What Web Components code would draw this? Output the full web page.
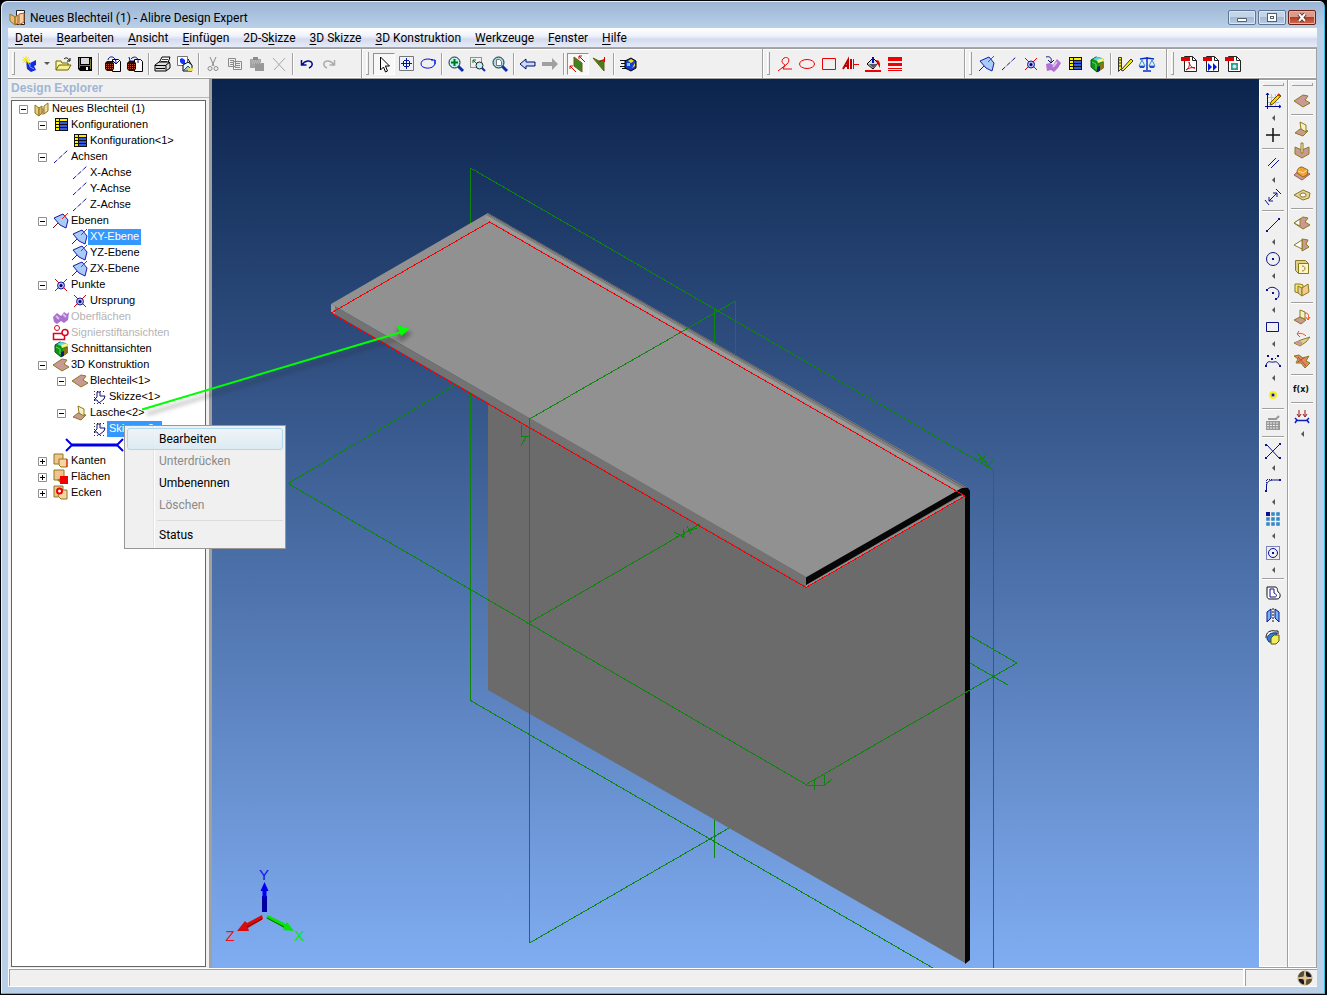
<!DOCTYPE html>
<html lang="de">
<head>
<meta charset="utf-8">
<title>Neues Blechteil (1) - Alibre Design Expert</title>
<style>
    html, body { margin: 0; height: 100%; background: #000; }
    body { font: 12px/16px Roboto, "Open Sans", sans-serif; color: #000; }
</style>
</head>
<body>
<app-window caption="Neues Blechteil (1) - Alibre Design Expert">
    <menu-bar slot="menu" items="_Datei|_Bearbeiten|_Ansicht|_Einfügen|2D-S_kizze|_3D Skizze|_3D Konstruktion|_Werkzeuge|_Fenster|_Hilfe"></menu-bar>

    <tool-band slot="bands" items="new:Neu:menu open:Öffnen save:Speichern | checkout:Auschecken checkin:Einchecken | print:Drucken publish:Veröffentlichen | cut:Ausschneiden copy:Kopieren paste:Einfügen delete:Löschen | undo:Rückgängig redo:Wiederholen"></tool-band>
    <tool-band slot="bands" items="select:Auswählen:pressed pan:Verschieben rotate:Drehen | zoomin:Vergrößern zoomwin:Zoomfenster zoomfit:Einpassen | prev:Zurück next:Vor | plane1:Ausrichten:pressed plane2:Frontansicht | render:Schattierung"></tool-band>
    <tool-band slot="bands" items="redline:Freihand redellipse:Ellipse redrect:Rechteck redtext:Text bucket:Füllfarbe redlines:Linienstärke"></tool-band>
    <tool-band slot="bands" items="ebene:Ebene axis:Achse point:Punkt surface2:Oberfläche config:Konfiguration section:Schnitt | measure:Messen scale:Masse"></tool-band>
    <tool-band slot="bands" items="pdf:PDF pdf3d:PDF-Export pdfpub:PDF-Vorschau"></tool-band>

    <design-explorer slot="work" heading="Design Explorer">
        <tree-item level="0" icon="part" state="open">Neues Blechteil (1)</tree-item>
        <tree-item level="1" icon="config" state="open">Konfigurationen</tree-item>
        <tree-item level="2" icon="config">Konfiguration&lt;1&gt;</tree-item>
        <tree-item level="1" icon="axis" state="open">Achsen</tree-item>
        <tree-item level="2" icon="axis">X-Achse</tree-item>
        <tree-item level="2" icon="axis">Y-Achse</tree-item>
        <tree-item level="2" icon="axis">Z-Achse</tree-item>
        <tree-item level="1" icon="ebene" state="open">Ebenen</tree-item>
        <tree-item level="2" icon="ebene" selected>XY-Ebene</tree-item>
        <tree-item level="2" icon="ebene">YZ-Ebene</tree-item>
        <tree-item level="2" icon="ebene">ZX-Ebene</tree-item>
        <tree-item level="1" icon="point" state="open">Punkte</tree-item>
        <tree-item level="2" icon="point">Ursprung</tree-item>
        <tree-item level="1" icon="surface" dimmed>Oberflächen</tree-item>
        <tree-item level="1" icon="redview" dimmed>Signierstiftansichten</tree-item>
        <tree-item level="1" icon="section">Schnittansichten</tree-item>
        <tree-item level="1" icon="sheet" state="open">3D Konstruktion</tree-item>
        <tree-item level="2" icon="sheet" state="open">Blechteil&lt;1&gt;</tree-item>
        <tree-item level="3" icon="sketch">Skizze&lt;1&gt;</tree-item>
        <tree-item level="2" icon="flange" state="open">Lasche&lt;2&gt;</tree-item>
        <tree-item level="3" icon="sketch" selected>Skizze&lt;2&gt;</tree-item>
        <rollback-bar></rollback-bar>
        <tree-item level="1" icon="edges" state="closed">Kanten</tree-item>
        <tree-item level="1" icon="faces" state="closed">Flächen</tree-item>
        <tree-item level="1" icon="corners" state="closed">Ecken</tree-item>
    </design-explorer>
    <model-view slot="work"></model-view>
    <tool-band slot="work" vertical items="sketchmode:Skizzenmodus:menu plus:Punkt | parallel:Parallel:menu dim:Bemaßung | line:Linie:menu circle:Kreis:menu arc:Bogen:menu rect:Rechteck:menu spline:Spline:menu dot:Knoten | keyboard:Eingabe | trim:Stutzen:menu fillet:Verrundung:menu pattern:Muster:menu cpattern:Kreismuster:menu | offset:Versatz mirror:Spiegeln project:Projizieren"></tool-band>
    <tool-band slot="work" vertical items="sheet:Blech | flange:Lasche bend:Biegung dimple:Sicke hole:Loch | cutl:Schnitt cutr:Eckschnitt closed:Falz unfold:Abwicklung | bendup:Hochbiegen unbend:Aufbiegen rebend:Rückbiegen | fx:Gleichung | constraint:Bedingung:menu"></tool-band>

    <leader-arrow slot="overlay"></leader-arrow>
    <context-menu slot="overlay" items="Bearbeiten:hot|Unterdrücken:off|Umbenennen|Löschen:off|-|Status"></context-menu>
    <status-bar slot="status"></status-bar>
</app-window>

<script>
const TAN = '#e3cf9b', ROSE = '#c99a94', OLIVE = '#8c7a1e', NAVY = '#0a128c';

// pieces shared by several icons
const SHEET = `<path d="M0 8L9 2l5 1-3 4 5 3-7 4z" fill="${ROSE}" stroke="${OLIVE}"/>`;
const PAGE = '<path d="M3.5.5h8l4 4v11h-12z" fill="#fff" stroke="#222"/><path d="M11.5.5v4h4" stroke="#222"/><path d="M0 1h9v4H0z" fill="#e00000"/>';
const BASKET = '<path d="M7.500 3.500h6l2 2v10h-8z" fill="#fff" stroke="#000"/><path d="M0 7l2-2h5l2 2v6l-2 2H2l-2-2z" fill="#2b0d00"/><path d="M1 8.500h7M1 10.500h7M1 12.500h7" stroke="#c05a28" stroke-dasharray="1 1"/>'.replaceAll('.500', '.5');

// 16 x 16 artwork
const ICONS = {
    app: `<path d="M6.5.5h8v14h-8z" fill="#fff" stroke="#222"/><path d="M0 4l5 3v8l-5-4zM5 7l3-2v8l-3 2z" fill="#f0b878" stroke="${OLIVE}"/><path d="M9 4l5-1v9l-5 3z" fill="#f6cfa0" stroke="#c05020"/>`,
    part: `<path d="M1 4l4 3v8l-4-3z" fill="#eccb82" stroke="${OLIVE}"/><path d="M5 10l4-3 5 3-5 4-3-1z" fill="#c9a0a8"/><path d="M5 7l3-2v7l-3 3z" fill="#dcb45e" stroke="${OLIVE}"/><path d="M10 5l4-3v8l-4 3z" fill="#f2dc9e" stroke="${OLIVE}"/>`,
    new: '<path d="M4 5l4 2 6-3v5l-2 1 2 4-5 2-4-3z" fill="#1428e0"/><path d="M8 7v4l4 2M5 5l3 5" stroke="#6e9cff"/><path d="M4 0v8M0 4h8M1 1l6 6M7 1L1 7" stroke="#f4e400"/>',
    open: '<path d="M1 14V5h5l1 2h6v2" fill="#fff8a0" stroke="#6b6400"/><path d="M1 14l3-5h12l-3 5z" fill="#f7f08a" stroke="#6b6400"/><path d="M9 3c2-2 4-1 5 1M15 2v3h-3" stroke="#000"/>',
    save: '<path d="M1 1h14v14H3l-2-2z" fill="#000"/><path d="M4 2h8v6H4z" fill="#d8d8d8"/><path d="M2 2h1v10H2zM13 3h1v10h-1zM2 9h12v1H2z" fill="#807a28"/><path d="M9 11h2v3H9z" fill="#f5f5f5"/>',
    checkout: BASKET + '<path d="M3 4c1-5 8-4 8 3M8 5l3 3 3-3" stroke="#001090"/>',
    checkin: BASKET + '<path d="M11 7c1-7-5-7-7-4M2 1l1 4h4" stroke="#001090"/>',
    print: '<path d="M4 7l3-6h8l-2 6" fill="#fff" stroke="#000"/><path d="M7 3.500h6M6 5.500h6" stroke="#444"/><path d="M0 9l4-3h10l1 2v4l-4 3H0z" fill="#ddd" stroke="#000"/><path d="M0 9.500h11v5M11 9l4-3M1 12.500h9" stroke="#000"/><path d="M8 11h2v1H8z" fill="#e6dc00"/>'.replaceAll('.500', '.5'),
    publish: '<path d="M.5.5h10v9H.5z" fill="#fff" stroke="#777"/><path d="M3 3l2-1 3 2v4H5L3 6z" fill="#1633ff"/><path d="M11 3l3 5" stroke="#000"/><path d="M6 9l5-3 4 3v6H6z" fill="#e8f6ff" stroke="#000"/><path d="M7 14l4-4 4 4" fill="#86c9ee" stroke="#146080"/><path d="M11 12h5v3h-5z" fill="#ead968"/>',
    cut: '<path d="M5 1l4 9M11 1L7 10" stroke="#8b8b8b"/><circle cx="5" cy="12.5" r="2" stroke="#8b8b8b"/><circle cx="11" cy="12.5" r="2" stroke="#8b8b8b"/>',
    copy: '<path d="M1.5 2.5h7v8h-7zM6.500 5.500h8v8h-8z" fill="#f0f0f0" stroke="#8b8b8b"/><path d="M3 4.500h4M3 6.500h3M3 8.500h3M8 7.500h5M8 9.500h5M8 11.500h5" stroke="#8b8b8b"/>'.replaceAll('.500', '.5'),
    paste: '<path d="M1 3h11v9H1z" fill="#a4a4a4"/><path d="M4 1h5v3H4z" fill="#8b8b8b"/><path d="M6 7h9v8H6z" fill="#999"/><path d="M2 5h10M3 7h9" stroke="#ccc" stroke-dasharray="1 1"/>',
    delete: '<path d="M2 2l12 13M14 2L3 14" stroke="#a8a8a8"/>',
    undo: '<path d="M2.5 4v5h5M3 9c3-5 9-5 10-2 1 3-1 4-3 5" stroke="#000b8c" stroke-width="1.5"/>',
    redo: '<path d="M13.5 4v5h-5M13 9C10 4 4 4 3 7c-1 3 1 4 3 5" stroke="#aaa" stroke-width="1.5"/>',
    select: '<path d="M4.5 1v13l3-3 2 5 2-1-2-5h4z" fill="#fff" stroke="#000"/>',
    pan: '<path d="M1.5.5h14v14h-14z" fill="#f0f0f8" stroke="#777"/><path d="M8.5 2v11M3 7.500h11M6 4.500h5M6 10.500h5M5.500 5v5M11.500 5v5" stroke="#001a9c"/>'.replaceAll('.500', '.5'),
    rotate: '<path d="M13 4c-5-2-12-1-12 4s12 6 14 0V4M11 4h4v4" stroke="#0010e0"/>',
    zoomin: '<path d="M10 10l5 5" stroke="#0b2fae" stroke-width="3"/><circle cx="6.5" cy="6.5" r="5.5" fill="#b8f4f4" stroke="#222"/><path d="M6.5 3v7M3 6.5h7" stroke="#007810" stroke-width="2"/>',
    zoomwin: '<path d="M.5 1.5h11v10H.5z" stroke="#333" stroke-dasharray="1 1"/><path d="M3 4h3M3 4v3M3 4l4 4" stroke="#007810"/><path d="M12 12l3 3" stroke="#0b2fae" stroke-width="2"/><circle cx="9.5" cy="9.5" r="3.5" fill="#b8f4f4" stroke="#222"/>',
    zoomfit: '<path d="M10 10l5 5" stroke="#0b2fae" stroke-width="3"/><circle cx="6.5" cy="6.5" r="5.5" fill="#a9dce8" stroke="#222"/><path d="M4.5 3.5h3l2 2v4h-5z" fill="#fff" stroke="#777"/>',
    prev: '<path d="M0 8l6-5v3h9v4H6v3z" fill="#c8dcff" stroke="#000a70"/>',
    next: '<path d="M16 8l-6-6v4H0v4h10v4z" fill="#a0a0a0"/>',
    plane1: '<path d="M4 1l8 6v9L4 10z" fill="#3d8420" stroke="#6b5d10"/><path d="M0 10l6 6M0 13v-3h3M9 0l6 6M9 3V0h3" stroke="#e00000"/>',
    plane2: '<path d="M1 2l6 3 5-1v11z" fill="#3d8420" stroke="#6b5d10"/><path d="M7 6l6-3M12.5 1v5" stroke="#e00000"/>',
    render: '<path d="M0 4.500h6M1 7.500h5M0 10.500h6M2 12.500h6" stroke="#111"/><path d="M5 5l6-3 5 3v7l-5 3-6-3z" fill="#173fd4" stroke="#000"/><path d="M8 5l3-2 3 2-3 2zM12 12l3-2V7z" fill="#f4e000"/><path d="M7 7h3v3H7z" fill="#6fd3ef"/>'.replaceAll('.500', '.5'),
    redline: '<path d="M1 15l9-7c4-4 1-8-3-6-4 3-1 6 1 7l-2 4h9" stroke="#f00000"/>',
    redellipse: '<ellipse cx="8" cy="8" rx="7.5" ry="4.5" stroke="#f00000"/>',
    redrect: '<path d="M1.5 2.5h13v11h-13z" stroke="#f00000"/>',
    redtext: '<path d="M10.5 3v10M11 8.5h5" stroke="#f00000"/><path d="M8 3v10M0 13l5-9v9M2 10h3" stroke="#c00000" stroke-width="2"/>',
    bucket: '<path d="M2 8l6-6 5 5-5 6z" fill="#ddd" stroke="#000"/><path d="M8 1v6" stroke="#0010c0" stroke-width="2"/><path d="M4 8h8l-4 4z" fill="#556"/><path d="M11 4c4 0 4 3 4 8l-3-5z" fill="#e00000"/><path d="M0 14h16v2H0z" fill="#f00000"/>',
    redlines: '<path d="M1 1h14v4H1zM1 7h14v3H1zM1 12h14v1H1zM1 14h14v1H1z" fill="#f00000"/>',
    ebene: '<path d="M0 15l5-5" stroke="#900000"/><path d="M1 5l9-4 5 6-2 8-6-3z" fill="#a8cbf7" stroke="#1a1aa8"/><path d="M9 6l6-6" stroke="#e02020"/>',
    axis: '<path d="M1 14L15 1" stroke="#101090" stroke-dasharray="4 1 1 1"/>',
    point: '<path d="M2 2l12 12M14 2L2 14" stroke="#e00000"/><circle cx="8" cy="8.5" r="3.5" fill="#b6b6ee" stroke="#1a1aa0"/><circle cx="8" cy="8.5" r="1.5" fill="#00006c"/>',
    surface: '<path d="M0 8l4-4 4 3 3-4 3 2 2-2-1 8-4 3-3-2-4 3-3-2z" fill="#a970cf"/><path d="M3 7l3 3M10 5l3 3" stroke="#dcbdf0" stroke-width="2"/>',
    surface2: '<path d="M1 8l4-1 3 2 4-6 4 4-3 5-4 4-3-2-4 1z" fill="#b070d4"/><path d="M8 11l4-5" stroke="#e2c2f2" stroke-width="2"/><path d="M1 1c4-1 6 1 5 5M3 4l3 3 3-3" stroke="#001070"/>',
    config: '<path d="M2 1h13v13H2z" fill="#111"/><path d="M3 2h3v2H3zM7 2h7v2H7zM3 5h3v2H3zM3 8h3v2H3zM3 11h3v2H3z" fill="#fff000"/><path d="M7 5h7v2H7zM7 8h7v2H7zM7 11h7v2H7z" fill="#2f5be6"/>',
    section: '<path d="M2 4l5-3 7 2v9l-6 4-6-5z" fill="#149414" stroke="#052"/><path d="M4 3l4-2 5 1-5 3z" fill="#5cd6f4"/><path d="M8 4l6-2 1 3-6 2z" fill="#fff27a"/><path d="M10 8l5-2v6l-5 3z" fill="#8a7216"/><path d="M8 11l3-1v5l-3 1z" fill="#0a1c80"/><path d="M3 6l4 2v5" stroke="#5be05b"/>',
    measure: '<path d="M1.5 1.5h3v11l-3 3z" fill="#ffee00" stroke="#333"/><path d="M4 14L14 3l2 2L6 15z" fill="#ffee00" stroke="#333"/><path d="M2 4h2M2 7h2M2 10h2" stroke="#333"/>',
    scale: '<path d="M8 1v13M1 3l7-1 7 1M4 15h8" stroke="#0a2cc8" stroke-width="1.5"/><path d="M0 10l3-6 3 6zM10 10l3-6 3 6z" stroke="#2a8ad8"/><path d="M0 10h6l-1 2H1zM10 10h6l-1 2h-4z" fill="#1a4fd8"/>',
    pdf: PAGE + '<path d="M5 14c3-2 4-5 3-8 1 4 3 6 6 6-4-1-6 0-9 2" stroke="#d00000"/>',
    pdf3d: PAGE + '<path d="M5 7l4 4-4 4zM10 7l4 4-4 4z" fill="#0018e8"/>',
    pdfpub: PAGE + '<path d="M6 7h7v7H6z" fill="#2a9d94"/><circle cx="9.5" cy="10.5" r="2" fill="#bff0e8"/>',
    redview: '<path d="M.5 8.5h11v6H.5z" fill="#fff" stroke="#e00020" stroke-width="1.5"/><circle cx="4" cy="3" r="2.5" fill="#fff" stroke="#e00020"/><circle cx="12" cy="7.5" r="3" fill="#fff" stroke="#e00020" stroke-width="1.5"/>',
    sheet: SHEET,
    sketch: '<path d="M3 2.5h11M3.5 2v12M3 14.5h11" stroke="#333" stroke-dasharray="1 2"/><path d="M6 3h3v4h5l-1 3-5 4-2-3H3l3-3z" stroke="#101070"/>',
    flange: `<path d="M1 12l5-4 8 2-5 5z" fill="${ROSE}" stroke="${OLIVE}"/><path d="M6 1l6 3v7L7 8z" fill="#f6f0c8" stroke="${OLIVE}"/>`,
    edges: `<path d="M1 1h9v7l-4 3H1z" fill="#f2c38c" stroke="${OLIVE}"/><path d="M6 6h8v8H8l-2-2z" fill="#f8d4a4" stroke="${OLIVE}"/><path d="M14 6v8" stroke="#f00"/>`,
    faces: `<path d="M1 1h10v8l-5 2H1z" fill="#f2c38c" stroke="${OLIVE}"/><path d="M4 11l5 4V8z" fill="${OLIVE}"/><path d="M7 7h8v8H7z" fill="#f00000"/>`,
    corners: `<path d="M1 1h9v8l-5 3H1z" fill="#f2c38c" stroke="${OLIVE}"/><path d="M7 5h7v9H8l-3-3z" fill="#f8d4a4" stroke="${OLIVE}"/><circle cx="6.5" cy="6" r="2.5" fill="#fff" stroke="#f00000" stroke-width="2"/>`,
    sketchmode: '<path d="M2 4.5h12M2 9.5h12M6.5 1v13M10.5 1v13" stroke="#aac4f5"/><path d="M2.5 0v16M0 13.5h16M1 2l1.5-2L4 2M14 12l2 1.5-2 1.5" stroke="#000a90"/><path d="M5 12l1-3 8-8 2 2-8 8z" fill="#f5d800" stroke="#6b5000"/><path d="M13 1l2 2" stroke="#e02020" stroke-width="2"/>',
    plus: '<path d="M8 1v14M1 8h14" stroke="#111" stroke-width="1.5"/>',
    parallel: `<path d="M3 11l8-8M6 13l8-8" stroke="${NAVY}"/>`,
    dim: `<path d="M4 12l8-8M8 4h4v4M4 8v4h4M0 11l4 5M11 0l5 5" stroke="${NAVY}"/>`,
    line: `<path d="M2 14L14 2" stroke="${NAVY}"/><path d="M1 13h2v2H1zM13 1h2v2h-2z" fill="${NAVY}"/>`,
    circle: `<circle cx="8" cy="8" r="6.5" stroke="${NAVY}"/><path d="M7 7h2v2H7z" fill="${NAVY}"/>`,
    arc: `<path d="M2 5C6-1 15 4 14 9c0 3-1 4-3 5" stroke="${NAVY}"/><path d="M1 4h2v2H1zM10 13h2v2h-2zM7 7h2v2H7z" fill="${NAVY}"/>`,
    rect: `<path d="M1.5 3.5h12v9h-12z" stroke="${NAVY}"/>`,
    spline: `<path d="M1 13c1-7 5-3 8-4s4 1 6 4" stroke="${NAVY}"/><path d="M2 2h2v2H2zM6 5h2v2H6zM12 2h2v2h-2zM0 12h2v2H0zM14 12h2v2h-2zM10 5h1v1h-1z" fill="${NAVY}"/>`,
    dot: `<circle cx="8" cy="8" r="4" fill="#fff200"/><circle cx="8" cy="8" r="2" fill="${NAVY}" stroke="#ccd"/>`,
    keyboard: '<path d="M1 6h14v9H1z" fill="#999"/><path d="M2 8h12M2 10.5h12M2 13h12" stroke="#eee" stroke-dasharray="2 1"/><path d="M3 4h8l3-3" stroke="#999" stroke-width="2"/>',
    trim: `<path d="M2 2l12 13M2 14L14 2" stroke="${NAVY}"/><path d="M0 1h2v2H0zM0 14h2v2H0zM14 14h2v2h-2zM14 0h2v2h-2z" fill="${NAVY}"/>`,
    fillet: `<path d="M1.5 14V9c0-4 3-6 7-6H15" stroke="${NAVY}"/><path d="M1.5 8V2.5H8" stroke="${NAVY}" stroke-dasharray="1 1"/><path d="M0 13h2v2H0zM14 2h2v2h-2z" fill="${NAVY}"/>`,
    pattern: `<path d="M7 2h2v2H7zM12 2h2v2h-2zM2 7h2v2H2zM7 7h2v2H7zM12 7h2v2h-2zM2 12h2v2H2zM7 12h2v2H7zM12 12h2v2h-2z" fill="#b9ecff" stroke="#2d83c8" stroke-width="1.5"/><path d="M1 1h4v4H1z" fill="${NAVY}"/>`,
    cpattern: `<path d="M1.5 1.5h13v13h-13z" stroke="${NAVY}" stroke-dasharray="1 1"/><circle cx="8" cy="8" r="4.5" stroke="${NAVY}"/><path d="M7 7h2v2H7z" fill="${NAVY}"/>`,
    offset: '<path d="M2 2h8c3 0 2 3 3 5 3 1 3 7-1 7H5c-3 0-3-2-3-4z" fill="#fff" stroke="#111"/><path d="M5 4h4v4c3 1 3 4 1 4H5z" fill="#fff" stroke="#101090"/>',
    mirror: `<path d="M2 5l4-3v9l-4 4zM14 5l-4-3v9l4 4z" fill="#74b4f4" stroke="${NAVY}"/><path d="M8 1v14" stroke="#111" stroke-dasharray="2 1"/>`,
    project: '<path d="M1 9c0-6 4-8 9-7h3v3" fill="#fff" stroke="#111"/><path d="M2 10c0-4 4-7 10-6l-2 9H4z" fill="#2b7ce0" stroke="#102a80"/><path d="M6 9l3-3h5v6l-3 3H6z" fill="#f3ee58" stroke="#5c5600"/>',
    bend: `<path d="M1 4l7 3 7-3v7l-7 4-7-4z" fill="${ROSE}" stroke="${OLIVE}"/><path d="M7 0h2v10H7z" fill="#fbf5d8" stroke="${OLIVE}"/>`,
    dimple: `<path d="M0 10l7-6 9 5-8 6z" fill="${ROSE}" stroke="#985f50"/><path d="M3 8c0-4 2-6 5-6l6 3-1 5-4 2z" fill="#f2a338" stroke="#9a6410"/><path d="M4 6l5 2 4-3" stroke="#ffe0a0"/>`,
    hole: `<path d="M0 8l9-5 7 3-1 5-6 2z" fill="${TAN}" stroke="${OLIVE}"/><ellipse cx="9" cy="8" rx="3" ry="2" fill="#fff" stroke="${OLIVE}"/>`,
    cutl: SHEET + `<path d="M0 8l6-4v7z" fill="#fff" stroke="${OLIVE}"/>`,
    cutr: `<path d="M8 2l6 1-2 4 3 3-7 4z" fill="${ROSE}" stroke="${OLIVE}"/><path d="M0 8l8-5v9z" fill="#fff" stroke="${OLIVE}"/>`,
    closed: `<path d="M1.5 1.5h10l3 3v10h-10l-3-3z" fill="#ddd08a" stroke="${OLIVE}"/><path d="M4.5 4.5h10v10h-10z" fill="#fdf4cc" stroke="${OLIVE}"/><path d="M8 7c4 0 4 5 0 5" stroke="${OLIVE}"/>`,
    unfold: `<path d="M1 3h5l3 1v9l-8-2z" fill="#f4e96a" stroke="${OLIVE}"/><path d="M4 5l4 2v8l-4-3z" fill="${TAN}" stroke="${OLIVE}"/><path d="M8 7l6-4 1 8-7 4z" fill="#f5c98a" stroke="${OLIVE}"/>`,
    bendup: `<path d="M0 11l6-3 6 3-5 4z" fill="${ROSE}" stroke="${OLIVE}"/><path d="M6 1l5 2v7L6 8z" fill="#f6f0c8" stroke="${OLIVE}"/><path d="M11 4c4 0 4 3 3 6M12 8l2 3 2-3" stroke="#f04818"/>`,
    unbend: `<path d="M0 12l7-3 9-3-4 5-6 4z" fill="${TAN}" stroke="${OLIVE}"/><path d="M1 11l5-1 3 2-4 3z" fill="${ROSE}"/><path d="M12 5C9 2 5 2 4 3M5 0L3 3l3 3" stroke="#f04818"/>`,
    rebend: `<path d="M0 3l5-1 4 3 6-2-3 5 4 2-5 5-4-5-5 0 2-4z" fill="#d88c64" stroke="${OLIVE}"/><path d="M4 4l8 9M11 4L4 9" stroke="#c04c20"/>`,
    fx: '<text x="-1" y="11" fill="#111" font-family="DejaVu Sans, sans-serif" font-size="8" font-weight="bold">f(x)</text>',
    constraint: '<path d="M5 1v6M3 5l2 3 2-3M11 1v6M9 5l2 3 2-3" stroke="#a01010"/><path d="M1 9l2 2-2 3M15 9l-2 2 2 3M3 11.5h10" stroke="#0a1cc0" stroke-width="1.5"/>',
    globe: '<circle cx="8" cy="8" r="7" fill="#15152c" stroke="#a8a460"/><path d="M8 1a7 7 0 0 0-7 7h7zM8 15a7 7 0 0 0 7-7H8z" fill="#5a4c3c"/><path d="M8 1l1 6 6 1-6 1-1 6-1-6-6-1 6-1z" fill="#e6c78f" stroke="#e6c78f"/>'
};

function icon(name) {
    return `<svg width="16" height="16" viewBox="0 0 16 16" fill="none" overflow="visible" aria-hidden="true">${ICONS[name] || ''}</svg>`;
}

class AppWindow extends HTMLElement {
    constructor() {
        super();
        this.attachShadow({ mode: 'open' });
    }

    connectedCallback() {
        this.shadowRoot.innerHTML = `
            <style>
                :host {
                    display: flex;
                    flex-direction: column;
                    box-sizing: border-box;
                    height: 100vh;
                    padding: 0 8px 7px 7px;
                    border: solid #000;
                    border-width: 1px 2px 1px 1px;
                    border-radius: 7px 7px 0 0;
                    background: linear-gradient(#9ab4d3, #bad0e9 27px);
                    box-shadow: inset -1px -1px #34bfe0, inset 1px 1px #e4eefa;
                }
                header {
                    display: flex;
                    align-items: center;
                    gap: 4px;
                    height: 27px;
                    padding: 6px 1px 0 2px;
                    box-sizing: border-box;
                }
                h1 { flex: 1; margin: 0; font: inherit; }
                .controls { display: flex; gap: 2px; }
                .controls button {
                    width: 28px;
                    height: 15px;
                    padding: 0;
                    border: 1px solid #5f7592;
                    border-radius: 2px;
                    background: linear-gradient(#c4d4e8 50%, #a3b9d5 50%, #b9cde4);
                    box-shadow: inset 0 0 0 1px #dce7f4;
                    line-height: 0;
                }
                .controls .close {
                    border-color: #6b2018;
                    background: linear-gradient(#dc9c8c 50%, #b83c24 50%, #cf6e50);
                    box-shadow: inset 0 0 0 1px #e8b4a6;
                }
                .rebar {
                    display: grid;
                    grid-template-columns: 354fr 401fr 202fr 202fr 150fr;
                    height: 31px;
                    background: #f0f0f0;
                }
                .work { flex: 1; display: flex; min-height: 0; position: relative; background: #f0f0f0; }
            </style>
            <header>
                ${icon('app')}
                <h1></h1>
                <div class="controls">
                    <button aria-label="Minimieren"><svg width="14" height="11"><path d="M2.5 6.5h9v3h-9z" fill="#fff" stroke="#53606f"/></svg></button>
                    <button aria-label="Maximieren"><svg width="14" height="11"><path d="M2 1h10v9H2z" fill="#53606f"/><path d="M3 2h8v7H3z" fill="#fff"/><path d="M5 4h4v3H5z" fill="#53606f"/><path d="M6 5h2v1H6z" fill="#fff"/></svg></button>
                    <button class="close" aria-label="Schließen"><svg width="14" height="11"><path d="M4 2l6 7M10 2L4 9" stroke="#5a3030" stroke-width="4"/><path d="M4 2l6 7M10 2L4 9" stroke="#fff" stroke-width="2"/></svg></button>
                </div>
            </header>
            <slot name="menu"></slot>
            <div class="rebar"><slot name="bands"></slot></div>
            <main class="work"><slot name="work"></slot><slot name="overlay"></slot></main>
            <slot name="status"></slot>
        `;
        this.shadowRoot.querySelector('h1').textContent = this.getAttribute('caption');
    }
}

class MenuBar extends HTMLElement {
    constructor() {
        super();
        this.attachShadow({ mode: 'open' });
    }

    connectedCallback() {
        // an underscore stands before the access key
        const items = this.getAttribute('items').split('|')
            .map((text) => `<button>${text.replace(/_(.)/, '<u>$1</u>')}</button>`)
            .join('');
        this.shadowRoot.innerHTML = `
            <style>
                :host {
                    display: flex;
                    height: 19px;
                    border-bottom: 1px solid #a8a8a8;
                    background: linear-gradient(#fff, #f0f3fb 40%, #d5dbee 60%, #e6ebf8);
                }
                button {
                    padding: 0 7px;
                    border: 0;
                    background: none;
                    font: inherit;
                    white-space: nowrap;
                }
                u { text-underline-offset: 2px; }
            </style>
            ${items}
        `;
    }
}

class ToolBand extends HTMLElement {
    constructor() {
        super();
        this.attachShadow({ mode: 'open' });
    }

    connectedCallback() {
        const items = this.getAttribute('items').split(' ').map((item) => {
            if (item === '|') return '<i class="sep"></i>';
            const [name, label, flag] = item.split(':');
            const caret = flag === 'menu' ? `<button class="caret" aria-label="${label} Auswahl"></button>` : '';
            return `<button class="${flag === 'pressed' ? 'pressed' : ''}" aria-label="${label}">${icon(name)}</button>${caret}`;
        }).join('');
        this.shadowRoot.innerHTML = `
            <style>
                :host {
                    display: flex;
                    align-items: center;
                    min-width: 0;
                    box-sizing: border-box;
                    padding-left: 4px;
                    border: solid #a0a0a0;
                    border-width: 1px 1px 1px 0;
                    box-shadow: inset 1px 1px #fff, inset 0 -1px #fff;
                    background: #f0f0f0;
                }
                :host([vertical]) {
                    flex: 0 0 29px;
                    flex-direction: column;
                    padding: 3px 0 0;
                }
                .grip {
                    flex: none;
                    width: 2px;
                    height: 22px;
                    margin-right: 4px;
                    border: solid #a0a0a0;
                    border-width: 0 1px 1px 0;
                    box-shadow: inset 1px 0 #fff;
                }
                button {
                    flex: none;
                    display: grid;
                    place-items: center;
                    width: 22px;
                    height: 22px;
                    padding: 0;
                    border: 1px solid transparent;
                    background: none;
                }
                .pressed { border-color: #909090 #fff #fff #909090; background: #f8f8f8; }
                .sep { flex: none; width: 1px; height: 22px; margin: 0 3px 0 2px; background: #a0a0a0; box-shadow: 1px 0 #fff; }
                .caret { width: 11px; }
                .caret::before { content: ""; border: solid transparent; border-width: 3px 3px 0; border-top-color: #555; }
                :host([vertical]) .grip { width: 20px; height: 2px; margin: 0 0 4px; }
                :host([vertical]) .sep { width: 22px; height: 1px; margin: 2px 0 3px; box-shadow: 0 1px #fff; }
                :host([vertical]) .caret { width: 22px; height: 12px; }
                :host([vertical]) .caret::before { border-width: 3px 3px 3px 0; border-color: transparent #555; }
            </style>
            <span class="grip"></span>
            ${items}
        `;
    }
}

class DesignExplorer extends HTMLElement {
    constructor() {
        super();
        this.attachShadow({ mode: 'open' });
    }

    connectedCallback() {
        this.shadowRoot.innerHTML = `
            <style>
                :host {
                    flex: 0 0 204px;
                    display: flex;
                    flex-direction: column;
                    box-sizing: border-box;
                    padding-left: 3px;
                    border-right: 3px solid #a0a0a0;
                    background: #f0f0f0;
                    font-family: "Liberation Sans", Arial, sans-serif;
                }
                h2 {
                    margin: 0 0 2px;
                    border-bottom: 1px solid #a3bbdb;
                    font-size: 12px;
                    line-height: 18px;
                    color: #9fb6d6;
                }
                [role=tree] {
                    flex: 1;
                    margin: 0 3px 1px 0;
                    border: 1px solid #646464;
                    background: #fff;
                    overflow: hidden;
                    font-size: 11px;
                }
            </style>
            <h2>${this.getAttribute('heading')}</h2>
            <div role="tree"><slot></slot></div>
        `;
    }
}

class TreeItem extends HTMLElement {
    constructor() {
        super();
        this.attachShadow({ mode: 'open' });
    }

    connectedCallback() {
        const state = this.getAttribute('state');
        const bar = state === 'closed' ? 'M2 4.5h5M4.5 2v5' : 'M2 4.5h5';
        const expander = state
            ? `<button aria-label="Zweig"><svg width="9" height="9"><path d="M.5.5h8v8h-8z" fill="#fff" stroke="#919191"/><path d="${bar}" stroke="#000"/></svg></button>`
            : '<button disabled aria-hidden="true"></button>';
        this.setAttribute('role', 'treeitem');
        this.shadowRoot.innerHTML = `
            <style>
                :host { display: flex; height: 16px; padding-left: ${7 + 19 * this.getAttribute('level')}px; white-space: nowrap; }
                :host([dimmed]) { color: #b4b4b4; }
                :host([selected]) span { background: #3399ff; color: #fff; }
                button { width: 9px; height: 16px; margin-right: 6px; padding: 0; border: 0; background: none; line-height: 0; }
                svg { flex: none; }
                span { box-sizing: border-box; height: 16px; padding: 0 2px; line-height: 14px; }
            </style>
            ${expander}${icon(this.getAttribute('icon'))}<span><slot></slot></span>
        `;
    }
}

class RollbackBar extends HTMLElement {
    constructor() {
        super();
        this.attachShadow({ mode: 'open' });
        this.shadowRoot.innerHTML = `
            <style>:host { display: block; height: 16px; padding-left: 53px; }</style>
            <svg width="60" height="16" fill="none" stroke="#0000e8" stroke-width="2">
                <path d="M1 2l6 6-6 6M58 2l-6 6 6 6"/><path d="M7 8h45" stroke-width="3"/>
            </svg>
        `;
    }
}

class ModelView extends HTMLElement {
    constructor() {
        super();
        this.attachShadow({ mode: 'open' });
    }

    connectedCallback() {
        this.shadowRoot.innerHTML = `
            <style>
                :host { display: block; flex: 1; min-width: 0; background: linear-gradient(#0b244d, #80adf2); }
                svg { display: block; width: 100%; height: 100%; }
                .plane { fill: none; stroke: #0b860b; shape-rendering: crispEdges; }
                .profile { fill: none; stroke: #f50000; shape-rendering: crispEdges; }
                text { font-family: "Liberation Sans", Arial, sans-serif; font-size: 15px; text-anchor: middle; }
            </style>
            <svg viewBox="212 79 1047 889" preserveAspectRatio="xMinYMin slice" role="img" aria-label="3D-Ansicht">
                <!-- datum planes behind the part -->
                <path class="plane" d="M470.5 168V700.5L933 968M470.5 168L993.5 470V968M735.5 301V354M714.5 308V858M288 483.5L500 358.5M1017 663L970 636M970 663L1008 685M529.5 943L729 828"/>
                <path d="M488 400V690L965 963V489L700 440z" fill="#6b6b6b"/>
                <path d="M963 490q1-3 5-2l2 3V960l-5 4V497z" fill="#060606"/>
                <!-- flange -->
                <path d="M331 304L488 213L966 487L806 577z" fill="#919191"/>
                <path d="M488 213.5L965 487.5" stroke="#555" stroke-width="1"/>
                <path d="M487 214.5L963 488.5" stroke="#7c7c7c" stroke-width="2"/>
                <path d="M486 217L959 489.5" stroke="#9b9b9b" stroke-width="3"/>
                <path d="M331 304L806 577V586L331 312z" fill="#737373"/>
                <path d="M331 304l4 2v8l-4-2z" fill="#9a9a9a"/>
                <path d="M806 585L964 494V497L806 588z" fill="#8e8e8e"/>
                <path d="M806 577.5L960 489Q966 486 969 490L967 494L959 496L806 585z" fill="#060606"/>
                <path class="plane" d="M735.5 301L529.5 419V943M729 828L714 837M288 483.5L806 784.5L1017 663M527 624L700 524M521.5 425v12l8-1M521 446l5-9M674 532l11 6M676 537l9-3M683.5 529v9M687 526l4 8M686 532l11-4M975 450l14 16M976 461l9-4M981 464l5-10M988 467l5-7M806 785.5h18l8-6M824.5 775v10M814.5 780v10"/>
                <path class="profile" d="M331 313L806 587.5L965 496L489.5 222z"/>
                <!-- axis triad -->
                <path d="M262 896h5v16h-5z" fill="#0000a0"/>
                <path d="M264.5 882l4 9h-2v6h-4v-6h-2z" fill="#0000f0"/>
                <path d="M262 915l-15 8-2-2-8 10h12l-1-3 15-9z" fill="#d80c0c"/>
                <path d="M247 927l15-8" stroke="#700"/>
                <path d="M268 915l18 9 1-2 7 9-11-1 1-2-18-10z" fill="#06e406"/>
                <path d="M267 918l17 9" stroke="#055c05"/>
                <text x="264" y="880" fill="#1010e8">Y</text>
                <text x="230" y="941" fill="#f01010">Z</text>
                <text x="299" y="941" fill="#00e800">X</text>
            </svg>
        `;
    }
}

class LeaderArrow extends HTMLElement {
    constructor() {
        super();
        this.attachShadow({ mode: 'open' });
        this.shadowRoot.innerHTML = `
            <style>
                :host { position: absolute; left: 132px; top: 240px; pointer-events: none; line-height: 0; }
                .shadow { filter: blur(2px); opacity: .3; }
            </style>
            <svg width="290" height="104" viewBox="140 319 290 104" fill="none">
                <g class="shadow"><path d="M147 414L400 338" stroke="#222" stroke-width="3"/><path d="M397 329l15 4-11 9z" fill="#000" stroke="#000"/></g>
                <path d="M142 409.5L400 332.5" stroke="#00ff00" stroke-width="2"/>
                <path d="M397 325l13 4-9 7z" fill="#00ff00"/>
            </svg>
        `;
    }
}

class ContextMenu extends HTMLElement {
    constructor() {
        super();
        this.attachShadow({ mode: 'open' });
    }

    connectedCallback() {
        const items = this.getAttribute('items').split('|').map((item) => {
            if (item === '-') return '<hr>';
            const [text, flag] = item.split(':');
            return `<button role="menuitem" class="${flag === 'hot' ? 'hot' : ''}" ${flag === 'off' ? 'disabled' : ''}>${text}</button>`;
        }).join('');
        this.setAttribute('role', 'menu');
        this.shadowRoot.innerHTML = `
            <style>
                :host {
                    position: absolute;
                    left: 116px;
                    top: 346px;
                    width: 162px;
                    box-sizing: border-box;
                    display: flex;
                    flex-direction: column;
                    padding: 2px;
                    border: 1px solid #979797;
                    background: linear-gradient(90deg, transparent 28px, #e2e3e3 28px, #e2e3e3 29px, #fff 29px, #fff 30px, transparent 30px) #f0f0f0;
                }
                button {
                    height: 22px;
                    padding: 0 0 0 31px;
                    border: 1px solid transparent;
                    border-radius: 3px;
                    background: none;
                    font: inherit;
                    color: #000;
                    text-align: left;
                }
                button:disabled { color: #8a8a8a; }
                .hot { border-color: #aed8f0; background: linear-gradient(#eef4f8cc, #d8eaf4cc); }
                hr { width: 126px; height: 1px; margin: 4px 0 3px 30px; border: 0; background: #dcdcdc; }
            </style>
            ${items}
        `;
    }
}

class StatusBar extends HTMLElement {
    constructor() {
        super();
        this.attachShadow({ mode: 'open' });
        this.shadowRoot.innerHTML = `
            <style>
                :host { display: flex; gap: 2px; height: 19px; box-sizing: border-box; padding: 1px 0 1px 1px; background: #fff; }
                div { box-sizing: border-box; border: solid #a0a0a0; border-width: 1px 0 0 1px; background: #f0f0f0; }
                .text { flex: 1; }
                .globe { width: 72px; padding-right: 4px; text-align: right; line-height: 0; }
            </style>
            <div class="text" role="status"></div>
            <div class="globe">${icon('globe')}</div>
        `;
    }
}

customElements.define('app-window', AppWindow);
customElements.define('menu-bar', MenuBar);
customElements.define('tool-band', ToolBand);
customElements.define('design-explorer', DesignExplorer);
customElements.define('tree-item', TreeItem);
customElements.define('rollback-bar', RollbackBar);
customElements.define('model-view', ModelView);
customElements.define('leader-arrow', LeaderArrow);
customElements.define('context-menu', ContextMenu);
customElements.define('status-bar', StatusBar);
</script>
</body>
</html>
